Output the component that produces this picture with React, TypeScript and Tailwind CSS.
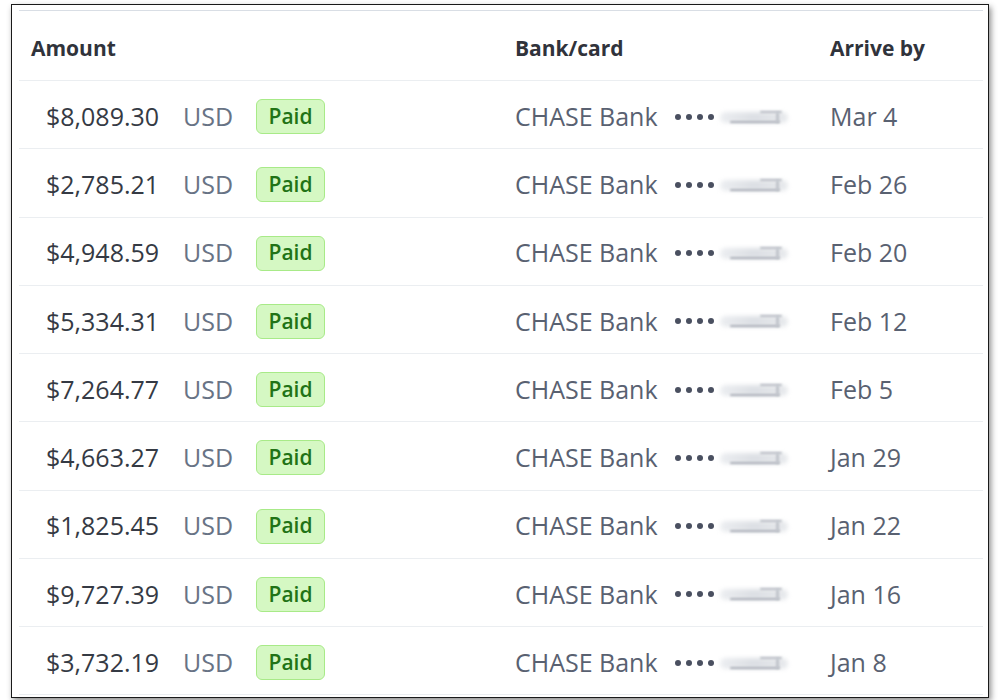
import React from "react";

const payouts = [
  { amount: "$8,089.30", date: "Mar 4" },
  { amount: "$2,785.21", date: "Feb 26" },
  { amount: "$4,948.59", date: "Feb 20" },
  { amount: "$5,334.31", date: "Feb 12" },
  { amount: "$7,264.77", date: "Feb 5" },
  { amount: "$4,663.27", date: "Jan 29" },
  { amount: "$1,825.45", date: "Jan 22" },
  { amount: "$9,727.39", date: "Jan 16" },
  { amount: "$3,732.19", date: "Jan 8" },
];

// blurred-out card digits
function Smudge() {
  return (
    <span className="relative ml-[2px] inline-block h-[20px] w-[76px]">
      <span className="absolute left-[4px] top-[5px] h-[11px] w-[68px] rounded-full bg-gradient-to-r from-[#eceef1] via-[#dcdfe4] to-[#e8eaed] blur-[2px]" />
      <span className="absolute left-[14px] top-[14px] h-[2px] w-[50px] rounded-full bg-[#a9aeb7] blur-[1px]" />
      <span className="absolute left-[44px] top-[4px] h-[2px] w-[22px] rounded-full bg-[#b7bbc3] blur-[1px]" />
      <span className="absolute left-[60px] top-[5px] h-[11px] w-[3px] rounded-full bg-[#c0c4cb] blur-[1px]" />
    </span>
  );
}

export default function App() {
  return (
    <div
      className="h-[700px] w-[1000px] overflow-hidden bg-white pl-[11px] pt-[4px]"
      style={{ fontFamily: '"Open Sans", "Noto Sans", sans-serif' }}
    >
      <div className="h-[694px] w-[978px] border border-[#1a1a1a] bg-white pl-[7px] pr-[5px] pt-[5px] shadow-[2px_3px_6px_rgba(0,0,0,0.45)]">
        <div className="border-t border-[#d9dee5]">
          <div className="flex h-[70px] items-center border-b border-[#ebeef1] pt-[6px] text-[21px] font-bold text-[#30333b]">
            <div className="w-[496px] pl-[12px]">Amount</div>
            <div className="w-[315px]">Bank/card</div>
            <div>Arrive by</div>
          </div>
          {payouts.map((p, i) => (
            <div
              key={i}
              className="flex h-[68.25px] items-center border-b border-[#ebeef1] pt-[4px] text-[25px]"
            >
              <div className="flex w-[496px] items-center pl-[27px]">
                <span className="w-[137px] text-[#353a44]">{p.amount}</span>
                <span className="w-[73px] text-[#687385]">USD</span>
                <span className="flex h-[35px] w-[69px] items-center justify-center rounded-[6px] border border-[#a8ea88] bg-[#d5f8c3] text-[21px] font-semibold text-[#217316]">
                  Paid
                </span>
              </div>
              <div className="flex w-[315px] items-center">
                <span className="w-[160px] text-[#596171]">CHASE Bank</span>
                <span className="flex items-center gap-[5px]">
                  <span className="h-[6px] w-[6px] rounded-full bg-[#4a5060]" />
                  <span className="h-[6px] w-[6px] rounded-full bg-[#4a5060]" />
                  <span className="h-[6px] w-[6px] rounded-full bg-[#4a5060]" />
                  <span className="h-[6px] w-[6px] rounded-full bg-[#4a5060]" />
                </span>
                <Smudge />
              </div>
              <div className="text-[#596171]">{p.date}</div>
            </div>
          ))}
        </div>
      </div>
    </div>
  );
}
